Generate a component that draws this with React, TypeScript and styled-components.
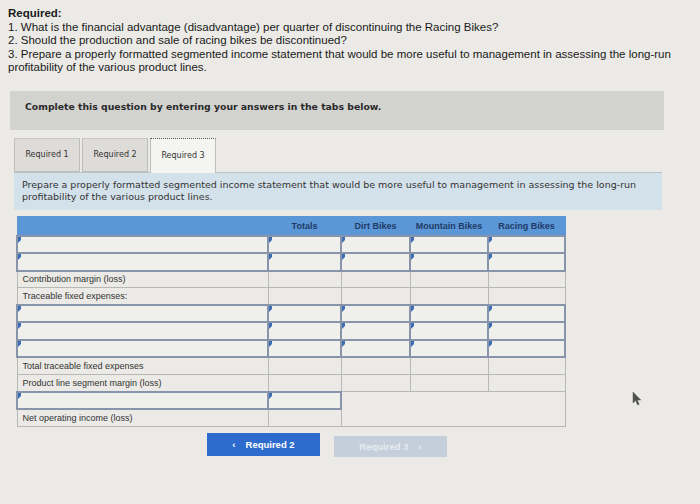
import React, { FC } from 'react';
import styled, { createGlobalStyle } from "styled-components"

const GlobalStyle = createGlobalStyle`
   html, body {
       margin: 0;
       padding: 0;
       background: #ebeae6;
   }
`

const PageStyle = styled.div`
   position: relative;
   width: 700px;
   height: 504px;
   overflow: hidden;
   box-sizing: border-box;
   padding: 7px 0 0 8px;
   background: #ebeae6;
   color: #1f1f1f;
`

const QuestionStyle = styled.div`
   font-family: "Liberation Sans", Arial, sans-serif;
   font-size: 11.5px;
   line-height: 13.6px;
   color: #1a1a1a;

   & > b {
       display: block;
       font-weight: bold;
   }
`

const BannerStyle = styled.div`
   margin: 16px 0 0 2px;
   width: 654px;
   height: 39px;
   box-sizing: border-box;
   padding: 10px 0 0 15px;
   background: #d2d2cf;
   font-family: "DejaVu Sans", Verdana, sans-serif;
   font-size: 9.3px;
   font-weight: bold;
   color: #2a2a2a;
`

const TabBarStyle = styled.div`
   display: flex;
   gap: 2px;
   margin: 8px 0 0 6px;
   height: 35px;
   align-items: flex-start;
`

const TabStyle = styled.div<{ $active?: boolean }>`
   width: 66px;
   height: ${p => p.$active ? 35 : 34}px;
   box-sizing: border-box;
   display: flex;
   align-items: center;
   justify-content: center;
   background: ${p => p.$active ? '#f4f4f1' : '#dedcd8'};
   border: 1px solid #bdbdb9;
   border-top: ${p => p.$active ? '1px dotted #555' : '1px solid #c9c9c5'};
   border-bottom: ${p => p.$active ? 'none' : '1px solid #bdbdb9'};
   font-family: "DejaVu Sans", Verdana, sans-serif;
   font-size: 8px;
   color: #333;
   position: relative;
   z-index: ${p => p.$active ? 2 : 1};
`

const PanelStyle = styled.div`
   margin: -1px 0 0 6px;
   width: 648px;
   box-sizing: border-box;
   padding: 6px 0 7px 8px;
   background: #d3e1ea;
   border-top: 1px solid #b9c3c9;
   font-family: "DejaVu Sans", Verdana, sans-serif;
   font-size: 9.5px;
   line-height: 12px;
   color: #333;
`

const TableStyle = styled.table`
   margin: 6px 0 0 8px;
   border-collapse: collapse;
   table-layout: fixed;
   font-family: "Liberation Sans", Arial, sans-serif;
   font-size: 9px;
   color: #333;

   & th {
       height: 18px;
       padding: 0;
       background: #5b96d6;
       color: #1f3b66;
       font-size: 9px;
       font-weight: bold;
       text-align: center;
       border: 1px solid #5b96d6;
       border-bottom: 1px solid #4a7fbf;
   }
`

const CellStyle = styled.td<{ $input?: boolean }>`
   position: relative;
   height: 17.3px;
   box-sizing: border-box;
   padding: 0 0 0 5px;
   border: ${p => p.$input ? '2px solid #8894aa' : '1px solid #b8b8b5'};
   background: ${p => p.$input ? '#efefec' : 'transparent'};
   white-space: nowrap;

   &::before {
       content: "";
       display: ${p => p.$input ? 'block' : 'none'};
       position: absolute;
       left: 0;
       top: 0;
       border-left: 3px solid #3a6db3;
       border-bottom: 3px solid transparent;
       border-top: 3px solid #3a6db3;
       border-right: 0;
       width: 0;
       height: 0;
   }
`

const ButtonRowStyle = styled.div`
   display: flex;
   gap: 14px;
   margin: 6px 0 0 199px;
   align-items: flex-start;
`

const NavButtonStyle = styled.div<{ $disabled?: boolean }>`
   width: 113px;
   height: ${p => p.$disabled ? 21 : 23}px;
   margin-top: ${p => p.$disabled ? 3 : 0}px;
   display: flex;
   align-items: center;
   justify-content: center;
   gap: 10px;
   background: ${p => p.$disabled ? '#c5cfdb' : '#2d6ccd'};
   color: ${p => p.$disabled ? '#e6ebf1' : '#ffffff'};
   font-family: "Liberation Sans", Arial, sans-serif;
   font-size: 9.5px;
   font-weight: bold;
`

const CursorStyle = styled.svg`
   position: absolute;
   left: 632px;
   top: 391px;
   opacity: 0.85;
`

type RowKind = 'input' | 'text'

interface Row {
    kind: RowKind
    label?: string
}

const mainRows: Row[] = [
    { kind: 'input' },
    { kind: 'input' },
    { kind: 'text', label: 'Contribution margin (loss)' },
    { kind: 'text', label: 'Traceable fixed expenses:' },
    { kind: 'input' },
    { kind: 'input' },
    { kind: 'input' },
    { kind: 'text', label: 'Total traceable fixed expenses' },
    { kind: 'text', label: 'Product line segment margin (loss)' },
]

const columns = ['Totals', 'Dirt Bikes', 'Mountain Bikes', 'Racing Bikes']
const widths = [251, 73, 69, 78, 77]

const App: FC = () => {
    return <PageStyle>
        <GlobalStyle />
        <QuestionStyle>
            <b>Required:</b>
            <div>1. What is the financial advantage (disadvantage) per quarter of discontinuing the Racing Bikes?</div>
            <div>2. Should the production and sale of racing bikes be discontinued?</div>
            <div>3. Prepare a properly formatted segmented income statement that would be more useful to management in assessing the long-run profitability of the various product lines.</div>
        </QuestionStyle>
        <BannerStyle>Complete this question by entering your answers in the tabs below.</BannerStyle>
        <TabBarStyle>
            <TabStyle>Required 1</TabStyle>
            <TabStyle>Required 2</TabStyle>
            <TabStyle $active>Required 3</TabStyle>
        </TabBarStyle>
        <PanelStyle>
            Prepare a properly formatted segmented income statement that would be more useful to management in assessing the long-run profitability of the various product lines.
        </PanelStyle>
        <TableStyle>
            <colgroup>
                {widths.map((w, i) => <col key={i} style={{ width: w }} />)}
            </colgroup>
            <thead>
                <tr>
                    <th></th>
                    {columns.map(c => <th key={c}>{c}</th>)}
                </tr>
            </thead>
            <tbody>
                {mainRows.map((r, i) =>
                    <tr key={i}>
                        <CellStyle $input={r.kind === 'input'}>{r.label}</CellStyle>
                        {columns.map(c => <CellStyle key={c} $input={r.kind === 'input'} />)}
                    </tr>
                )}
                <tr>
                    <CellStyle $input />
                    <CellStyle $input />
                    <CellStyle colSpan={3} rowSpan={2} />
                </tr>
                <tr>
                    <CellStyle>Net operating income (loss)</CellStyle>
                    <CellStyle />
                </tr>
            </tbody>
        </TableStyle>
        <ButtonRowStyle>
            <NavButtonStyle>
                <span>&lsaquo;</span>
                <span>Required 2</span>
            </NavButtonStyle>
            <NavButtonStyle $disabled>
                <span>Required 3</span>
                <span>&rsaquo;</span>
            </NavButtonStyle>
        </ButtonRowStyle>
        <CursorStyle width="10" height="15" viewBox="0 0 10 15">
            <path d="M1 1 L1 12 L3.6 9.6 L5.6 14 L7.2 13.3 L5.3 9 L8.8 9 Z" fill="#333" stroke="#555" strokeWidth="0.6" />
        </CursorStyle>
    </PageStyle>
}

export default App
